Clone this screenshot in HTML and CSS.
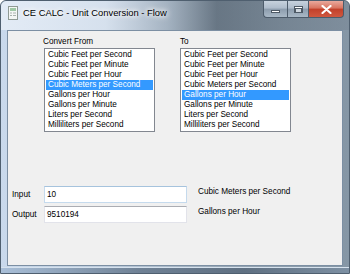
FILE: index.html
```html
<!DOCTYPE html>
<html>
<head>
<meta charset="utf-8">
<link rel="stylesheet" href="styles.css">
</head>
<body>
<div class="window">
  <div class="titlebar">
    <svg class="app-icon" width="10" height="14" viewBox="0 0 10 14">
      <rect x="0.5" y="0.5" width="9" height="13" fill="#f4f6f4" stroke="#8f9a94"/>
      <rect x="2" y="2" width="6" height="3" fill="#9fc8a5"/>
      <rect x="2" y="6.5" width="2" height="1" fill="#a9b2ad"/>
      <rect x="5" y="6.5" width="3" height="1" fill="#a9b2ad"/>
      <rect x="2" y="9" width="2" height="1" fill="#a9b2ad"/>
      <rect x="5" y="9" width="3" height="1" fill="#a9b2ad"/>
    </svg>
    <span class="title">CE CALC - Unit Conversion - Flow</span>
    <div class="caption-buttons">
      <div class="cb cb-min"><span class="min-glyph"></span></div>
      <div class="cb cb-max"><span class="max-glyph"></span></div>
      <div class="cb cb-close">
        <svg width="11" height="9" viewBox="0 0 11 9">
          <path d="M1.5 1 L9.5 8 M9.5 1 L1.5 8" stroke="#fff" stroke-width="2.2" stroke-linecap="round"/>
        </svg>
      </div>
    </div>
  </div>
  <div class="client">
    <div class="lists">
      <div class="group">
        <div class="group-label">Convert From</div>
        <ul class="listbox">
          <li>Cubic Feet per Second</li>
          <li>Cubic Feet per Minute</li>
          <li>Cubic Feet per Hour</li>
          <li class="selected">Cubic Meters per Second</li>
          <li>Gallons per Hour</li>
          <li>Gallons per Minute</li>
          <li>Liters per Second</li>
          <li>Milliliters per Second</li>
        </ul>
      </div>
      <div class="group group-to">
        <div class="group-label">To</div>
        <ul class="listbox">
          <li>Cubic Feet per Second</li>
          <li>Cubic Feet per Minute</li>
          <li>Cubic Feet per Hour</li>
          <li>Cubic Meters per Second</li>
          <li class="selected">Gallons per Hour</li>
          <li>Gallons per Minute</li>
          <li>Liters per Second</li>
          <li>Milliliters per Second</li>
        </ul>
      </div>
    </div>
    <div class="io">
      <div class="io-row">
        <span class="io-label">Input</span>
        <div class="textbox textbox-focus">10</div>
        <span class="unit">Cubic Meters per Second</span>
      </div>
      <div class="io-row">
        <span class="io-label">Output</span>
        <div class="textbox">9510194</div>
        <span class="unit">Gallons per Hour</span>
      </div>
    </div>
  </div>
  <div class="bottom-frame"></div>
</div>
</body>
</html>
```
FILE: styles.css
```css
* { box-sizing: border-box; }
html, body { margin: 0; padding: 0; }
body {
  width: 350px;
  height: 274px;
  overflow: hidden;
  font-family: "Liberation Sans", Arial, sans-serif;
  background: #ffffff;
}
.window {
  width: 350px;
  height: 274px;
  display: flex;
  flex-direction: column;
  background: linear-gradient(90deg, #c9d9ec 0%, #bccbdc 30%, #98a7b5 65%, #8596a5 100%);
  border: 1px solid #4f5f6f;
  border-radius: 6px 6px 0 0;
}
.titlebar {
  height: 29px;
  flex: none;
  display: flex;
  align-items: flex-start;
  padding-left: 7px;
  background: linear-gradient(90deg, rgba(228,236,246,0.95) 0%, rgba(218,228,240,0.85) 30%, rgba(160,174,188,0.6) 48%, rgba(70,84,98,0.6) 62%, rgba(95,110,124,0.55) 80%, rgba(120,134,148,0.5) 100%);
  border-radius: 6px 6px 0 0;
}
.app-icon {
  margin-top: 5px;
  flex: none;
}
.title {
  margin-left: 5px;
  margin-top: 6px;
  font-size: 9.4px;
  color: #000;
  text-shadow: 0 0 4px #fff, 0 0 6px #fff, 0 0 8px #fff;
  white-space: nowrap;
}
.caption-buttons {
  margin-left: auto;
  margin-right: 5px;
  display: flex;
  height: 17px;
}
.cb {
  height: 17px;
  display: flex;
  align-items: center;
  justify-content: center;
  border: 1px solid #4d5c6b;
  border-top: none;
}
.cb-min {
  width: 24px;
  border-radius: 0 0 0 4px;
  border-right: none;
  background: linear-gradient(180deg, #c7d2dd 0%, #aebccb 45%, #8c9cad 50%, #a9b8c6 100%);
}
.cb-max {
  width: 21px;
  border-right: none;
  background: linear-gradient(180deg, #c7d2dd 0%, #aebccb 45%, #8c9cad 50%, #a9b8c6 100%);
}
.cb-close {
  width: 36px;
  border-radius: 0 0 4px 0;
  background: linear-gradient(180deg, #e9a99c 0%, #d7735f 45%, #c2402a 50%, #d0583f 100%);
}
.min-glyph {
  width: 9px;
  height: 3px;
  margin-top: 5px;
  background: #fff;
  border: 1px solid #4e5a66;
}
.max-glyph {
  width: 9px;
  height: 7px;
  border: 1px solid #4e5a66;
  background: #fff;
}
.max-glyph::after {
  content: "";
  display: block;
  width: 5px;
  height: 3px;
  margin: 1px auto 0;
  border: 1px solid #4e5a66;
  background: #cfd7df;
}
.client {
  flex: none;
  height: 236px;
  margin: 0 6px;
  background: #f0f0f0;
  border: 1px solid #7c8fa3;
  font-size: 8.2px;
  color: #000;
}
.bottom-frame {
  flex: 1;
  margin: 1px 0 0;
  background: linear-gradient(90deg, #a9bfd8 0%, #6f8195 40%, #5f7082 70%, #7d90a3 100%);
  border-top: 1px solid #d6e2ee;
}
.lists {
  display: flex;
  gap: 24px;
  padding: 5px 0 0 35px;
}
.group-label {
  height: 11px;
  line-height: 11px;
  margin-bottom: 1px;
}
.group-to .group-label { padding-left: 1px; }
.group-to .listbox { margin-top: 1px; }
.listbox {
  list-style: none;
  margin: 0 0 0 1px;
  padding: 1px;
  width: 111px;
  height: 84px;
  background: #fff;
  border: 1px solid #828790;
}
.listbox li {
  height: 10px;
  line-height: 10px;
  padding-left: 2px;
  white-space: nowrap;
}
.listbox li.selected {
  background: #3399ff;
  color: #fff;
}
.io {
  margin-top: 54px;
  display: flex;
  flex-direction: column;
  gap: 3px;
  padding-left: 4px;
}
.io-row {
  display: flex;
  align-items: flex-start;
}
.io-label {
  width: 32px;
  height: 17px;
  line-height: 17px;
}
.textbox {
  width: 143px;
  height: 17px;
  line-height: 15px;
  padding-left: 2px;
  background: #fff;
  border: 1px solid #e2e3ea;
  border-top-color: #abadb3;
}
.textbox-focus {
  border-color: #c5daed;
  border-top-color: #a6c3dd;
}
.unit {
  margin-left: 11px;
  line-height: 11px;
}
```
